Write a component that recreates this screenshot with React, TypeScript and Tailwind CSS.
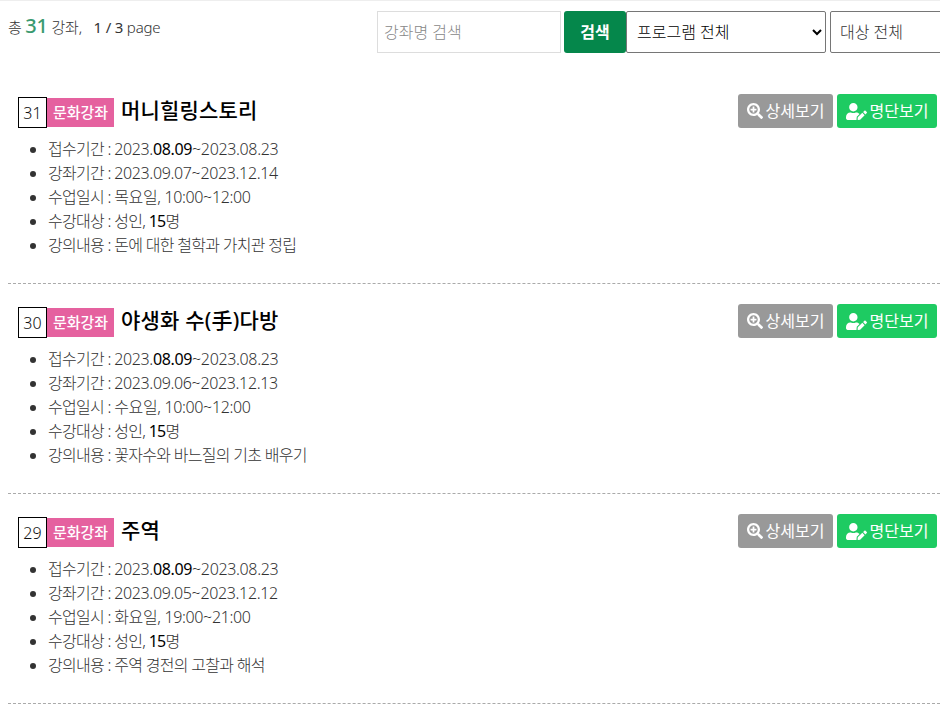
import { FaSearchPlus, FaUserEdit } from 'react-icons/fa'

type Course = {
  no: number
  title: string
  apply: [string, string, string]
  period: string
  schedule: string
  detail: string
}

const courses: Course[] = [
  {
    no: 31,
    title: '머니힐링스토리',
    apply: ['2023.', '08.09', '~2023.08.23'],
    period: '2023.09.07~2023.12.14',
    schedule: '목요일, 10:00~12:00',
    detail: '돈에 대한 철학과 가치관 정립',
  },
  {
    no: 30,
    title: '야생화 수(手)다방',
    apply: ['2023.', '08.09', '~2023.08.23'],
    period: '2023.09.06~2023.12.13',
    schedule: '수요일, 10:00~12:00',
    detail: '꽃자수와 바느질의 기초 배우기',
  },
  {
    no: 29,
    title: '주역',
    apply: ['2023.', '08.09', '~2023.08.23'],
    period: '2023.09.05~2023.12.12',
    schedule: '화요일, 19:00~21:00',
    detail: '주역 경전의 고찰과 해석',
  },
]

function CourseItem({ course }: { course: Course }) {
  return (
    <li className="ml-2 h-[210px] border-b border-dashed border-[#aaaaaa] pt-[20px]">
      <div className="flex items-start justify-between pr-[3px]">
        <div className="ml-2.5 mt-[3px] flex h-[31px] items-center">
          <span className="flex h-[31px] w-[29px] items-center justify-center border border-black text-[16px] font-light text-[#111111]">
            {course.no}
          </span>
          <span className="flex h-[29px] w-[67px] items-center justify-center bg-[#e5619f] text-[15px] font-medium text-white">
            문화강좌
          </span>
          <h3 className="mb-1 ml-[7px] text-[21px] font-medium tracking-[0.2px] text-black">{course.title}</h3>
        </div>
        <div className="flex gap-1">
          <button className="flex h-[34px] w-[95px] items-center justify-center gap-[3px] rounded-[3px] bg-[#999999] text-[16px] text-white">
            <FaSearchPlus className="text-[16px]" />
            상세보기
          </button>
          <button className="flex h-[34px] w-[100px] items-center justify-center gap-[3px] rounded-[3px] bg-[#1ecb62] text-[16px] text-white">
            <FaUserEdit className="text-[21px]" />
            명단보기
          </button>
        </div>
      </div>
      <ul className="ml-10 mt-[9px] list-disc text-[16px] font-light leading-[24px] tracking-[-0.7px] text-[#333333]">
        <li>
          접수기간 :{' '}
          <span className="tracking-[-0.35px]">
            {course.apply[0]}
            <span className="font-normal text-black">{course.apply[1]}</span>
            {course.apply[2]}
          </span>
        </li>
        <li>
          강좌기간 : <span className="tracking-[-0.35px]">{course.period}</span>
        </li>
        <li>
          수업일시 : <span className="tracking-[-0.35px]">{course.schedule}</span>
        </li>
        <li>
          수강대상 : 성인, <span className="font-normal text-black">15</span>명
        </li>
        <li>강의내용 : {course.detail}</li>
      </ul>
    </li>
  )
}

export default function App() {
  return (
    <div className="h-[705px] w-[940px] overflow-hidden border-t border-[#eeeeee] bg-white font-['Noto_Sans','Noto_Sans_CJK_KR',sans-serif]">
      <div className="flex h-[73px] items-start pl-2 pt-[10px]">
        <p className="w-[369px] shrink-0 text-[15px] font-light leading-[30px] tracking-[-0.2px] text-[#333333]">
          총 <strong className="text-[20px] font-medium text-[#3a9a6f]">31</strong> 강좌,{' '}
          <span className="ml-2">
            <span className="font-normal">1 / 3</span> page
          </span>
        </p>
        <div className="flex shrink-0">
          <input
            className="h-[42px] w-[184px] border border-[#dddddd] px-1.5 text-[16px] font-light outline-none placeholder:text-[#888888]"
            placeholder="강좌명 검색"
          />
          <button className="ml-[3px] h-[42px] w-[62px] shrink-0 rounded-[3px] bg-[#05874b] text-[16px] font-bold text-white">
            검색
          </button>
          <select className="h-[42px] w-[200px] shrink-0 rounded-[2px] border border-[#767676] bg-white px-1.5 text-[16px] font-light text-black">
            <option>프로그램 전체</option>
          </select>
          <select className="ml-1 h-[42px] w-[200px] shrink-0 rounded-[2px] border border-[#767676] bg-white px-[5px] text-[16px] font-light text-[#333333]">
            <option>대상 전체</option>
          </select>
        </div>
      </div>
      <ul>
        {courses.map((course) => (
          <CourseItem key={course.no} course={course} />
        ))}
      </ul>
    </div>
  )
}
